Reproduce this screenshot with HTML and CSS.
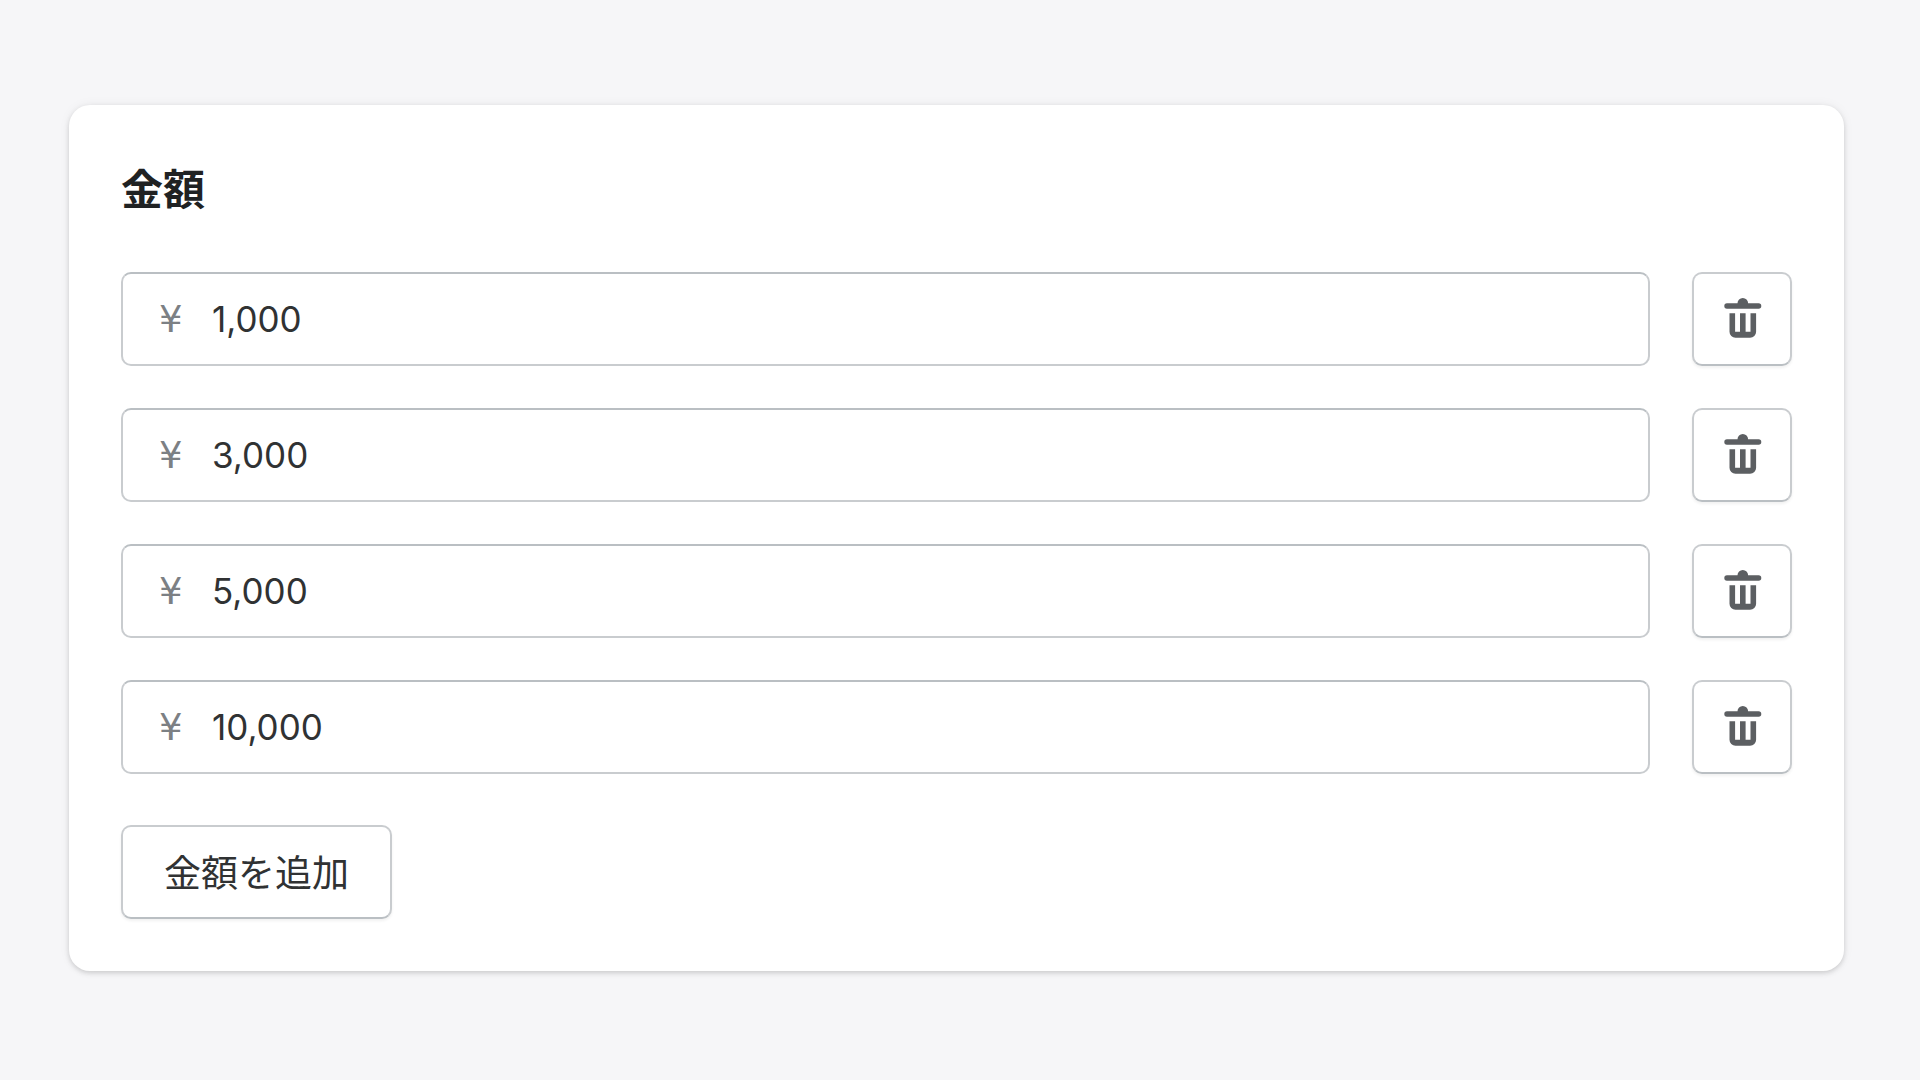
FILE: index.html
```html
<!DOCTYPE html>
<html lang="ja">
<head>
<meta charset="utf-8">
<meta name="viewport" content="width=device-width, initial-scale=1">
<title>金額</title>
<link rel="stylesheet" href="styles.css">
</head>
<body>
<svg class="sprite" aria-hidden="true">
  <symbol id="trash" viewBox="0 0 42 42">
    <path d="M16.500 5.300a5.300 5.300 0 0 1 10.600 0H37.600a2.700 2.700 0 0 1 0 5.400H6a2.700 2.700 0 0 1 0-5.400z"/>
    <path d="M8.500 15.300h5.600v18.500h4.900V15.300h5.600v18.500h4.900V15.300h5.600v18.400a6 6 0 0 1-6 6H14.500a6 6 0 0 1-6-6z"/>
  </symbol>
</svg>
<main class="card">
  <h1 class="card-title">金額</h1>
  <form>
    <ul class="amounts">
      <li class="amount">
        <label class="field"><span class="currency">¥</span><input class="value" type="text" inputmode="numeric" value="1,000" aria-label="金額 1"></label>
        <button class="button" type="button" aria-label="削除"><svg class="icon"><use href="#trash"/></svg></button>
      </li>
      <li class="amount">
        <label class="field"><span class="currency">¥</span><input class="value" type="text" inputmode="numeric" value="3,000" aria-label="金額 2"></label>
        <button class="button" type="button" aria-label="削除"><svg class="icon"><use href="#trash"/></svg></button>
      </li>
      <li class="amount">
        <label class="field"><span class="currency">¥</span><input class="value" type="text" inputmode="numeric" value="5,000" aria-label="金額 3"></label>
        <button class="button" type="button" aria-label="削除"><svg class="icon"><use href="#trash"/></svg></button>
      </li>
      <li class="amount">
        <label class="field"><span class="currency">¥</span><input class="value" type="text" inputmode="numeric" value="10,000" aria-label="金額 4"></label>
        <button class="button" type="button" aria-label="削除"><svg class="icon"><use href="#trash"/></svg></button>
      </li>
    </ul>
    <button class="button button-add" type="button">金額を追加</button>
  </form>
</main>
</body>
</html>
```
FILE: styles.css
```css
* {
  box-sizing: border-box;
}

body {
  margin: 0;
  padding: 105px 76px 108px 69px;
  background: #f6f6f8;
  color: #202223;
  font-family: Inter, "Noto Sans CJK JP", sans-serif;
}

.sprite {
  display: none;
}

.card {
  padding: 52px;
  background: #fff;
  border-radius: 21px;
  box-shadow: 0 0 12px rgba(23, 24, 24, 0.05), 0 2px 5px rgba(0, 0, 0, 0.15);
}

.card-title {
  margin: 0 0 49px;
  font-size: 42px;
  font-weight: 700;
  line-height: 66px;
}

.amounts {
  display: flex;
  flex-direction: column;
  gap: 42px;
  margin: 0 0 51px;
  padding: 0;
  list-style: none;
}

.amount {
  display: flex;
  gap: 42px;
}

.field {
  display: flex;
  flex: 1;
  align-items: center;
  gap: 29px;
  height: 94px;
  padding: 0 36px;
  border: 2px solid #c9cccf;
  border-top-color: #babfc3;
  border-radius: 10px;
}

.currency {
  width: 24px;
  padding-top: 2px;
  color: #7c8084;
  font-family: "DejaVu Sans", sans-serif;
  font-size: 37px;
  line-height: 48px;
}

.value {
  flex: 1;
  min-width: 0;
  padding: 0;
  border: 0;
  outline: 0;
  background: none;
  color: #303233;
  font: 400 35px/48px Inter, sans-serif;
}

.button {
  display: flex;
  align-items: center;
  justify-content: center;
  width: 100px;
  height: 94px;
  padding: 0;
  border: 2px solid #c9cccf;
  border-bottom-color: #babfc3;
  border-radius: 10px;
  background: #fff;
  box-shadow: 0 2px 3px rgba(0, 0, 0, 0.06);
  color: #303233;
}

.button-add {
  width: auto;
  padding: 0 41px 2px;
  font: 400 37px/48px "Noto Sans CJK JP", sans-serif;
}

.icon {
  width: 42px;
  height: 42px;
  fill: #5c5f62;
}
```
